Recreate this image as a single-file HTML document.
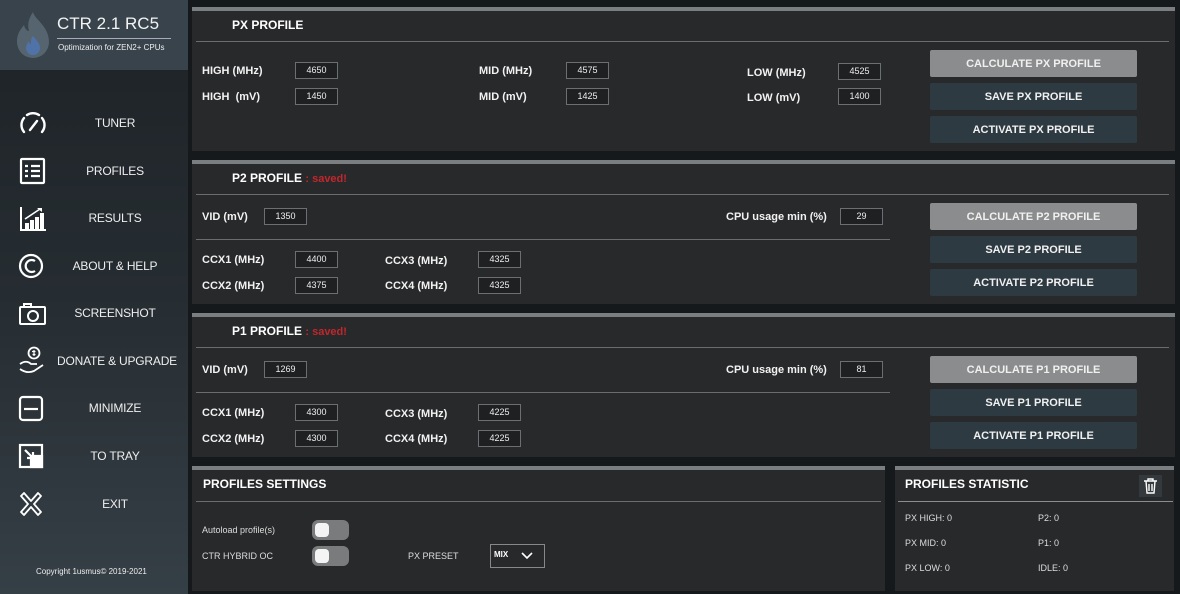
<!DOCTYPE html>
<html><head><meta charset="utf-8"><style>
*{margin:0;padding:0;box-sizing:border-box}
body{width:1180px;height:594px;background:#16191c;font-family:"Liberation Sans",sans-serif;color:#fff;position:relative;overflow:hidden}
.a{position:absolute}
.side{left:0;top:0;width:188px;height:594px;background:linear-gradient(180deg,#1d2226 0%,#262d32 50%,#353f46 100%)}
.hdr{left:0;top:0;width:188px;height:70px;background:#38434b}
.nav{position:absolute;left:40px;width:150px;text-align:center;font-size:12px;color:#eee;letter-spacing:-0.2px}
.ic{position:absolute;left:18px;width:30px;height:28px}
.pn{background:#28292b;border-top:4px solid #7b7e81}
.ttl{position:absolute;font-size:12px;font-weight:bold}
.ln{position:absolute;height:1px;background:#6a6d70}
.lb{position:absolute;font-size:11px;font-weight:bold;color:#f2f2f2}
.in{position:absolute;width:43px;height:17px;border:1px solid #6c6f72;background:#1f2022;font-size:9px;text-align:center;line-height:15px;color:#eee}
.bt{position:absolute;left:930px;width:207px;height:27px;border-radius:2px;background:#2e3a42;font-size:11px;font-weight:bold;text-align:center;line-height:28px;color:#f0f0f0}
.bt.c{background:#8b8c8d}
.red{color:#c0272d}
.sm{position:absolute;font-size:9px;color:#ddd}
.tg{position:absolute;width:37px;height:20px;border-radius:6px;background:#7a7b7c}
.tg::after{content:"";position:absolute;left:3px;top:3px;width:14px;height:14px;border-radius:4px;background:#f4f4f4}
</style></head><body>
<div class="a side"></div>
<div class="a hdr"></div>
<svg class="a" style="left:14px;top:10px" width="38" height="48" viewBox="0 0 38 48"><path d="M19 2c2 8 16 14 16 30a16 16 0 0 1-32 0c0-9 4-13 7-17 1 4 3 6 5 6-2-7 0-13 4-19z" fill="#56646f"/><path d="M19 26c3 4 7 7 7 12a7 7 0 0 1-14 0c0-3 2-5 3-7 0 2 1 3 2 3 0-3 0-6 2-8z" fill="#4f73a8"/></svg>
<div class="a" style="left:57px;top:14px;font-size:17px;color:#f3f3f3">CTR 2.1 RC5</div>
<div class="a" style="left:57px;top:38px;width:114px;height:1px;background:#aab"></div>
<div class="a" style="left:58px;top:43px;font-size:8px;color:#eee">Optimization for ZEN2+ CPUs</div>

<svg class="ic" style="top:110px" viewBox="0 0 30 28" fill="none" stroke="#fff" stroke-width="2.4" stroke-linecap="round"><path d="M6 22a11 11 0 0 1 0-14M24 22a11 11 0 0 0 0-14M9 5a11 11 0 0 1 12 0M12 20l7-9"/></svg>
<div class="nav" style="top:116px">TUNER</div>
<svg class="ic" style="top:157px" viewBox="0 0 30 28" fill="none" stroke="#fff" stroke-width="2.2"><rect x="3" y="2" width="23" height="24" rx="1"/><path d="M7 9h3M13 9h9M7 14h3M13 14h9M7 19h3M13 19h9"/></svg>
<div class="nav" style="top:164px">PROFILES</div>
<svg class="ic" style="top:205px" viewBox="0 0 30 28" fill="#fff"><path d="M2 2v24h26v-2H4V2z"/><rect x="7" y="18" width="4" height="6"/><rect x="12" y="15" width="4" height="9"/><rect x="17" y="12" width="4" height="12"/><rect x="22" y="8" width="4" height="16"/><path d="M7 14l15-10" stroke="#fff" stroke-width="1.6"/><path d="M19 3h5v4z"/></svg>
<div class="nav" style="top:211px">RESULTS</div>
<svg class="ic" style="top:252px" viewBox="0 0 30 28" fill="none" stroke="#fff" stroke-width="2.2"><circle cx="13" cy="14" r="11"/><path d="M17 9a6 6 0 1 0 0 10"/></svg>
<div class="nav" style="top:259px">ABOUT &amp; HELP</div>
<svg class="ic" style="top:300px" viewBox="0 0 30 28" fill="none" stroke="#fff" stroke-width="2"><rect x="2" y="7" width="25" height="17" rx="1"/><path d="M6 7V4h7v3"/><circle cx="15" cy="16" r="5"/></svg>
<div class="nav" style="top:306px">SCREENSHOT</div>
<svg class="ic" style="top:346px" viewBox="0 0 30 28" fill="none" stroke="#fff" stroke-width="1.8"><circle cx="16" cy="7" r="5.5"/><path d="M16 4v6M14 5.5h3.5M14.5 8.5h3" stroke-width="1.2"/><path d="M2 18c4-3 8-3 11 0h6M2 23c4 3 9 4 14 2l9-6"/></svg>
<div class="nav" style="top:354px;left:42px">DONATE &amp; UPGRADE</div>
<svg class="ic" style="top:395px" viewBox="0 0 30 28" fill="none" stroke="#fff" stroke-width="2.2"><rect x="2" y="2" width="22" height="23" rx="3"/><path d="M6 14h14"/></svg>
<div class="nav" style="top:401px">MINIMIZE</div>
<svg class="ic" style="top:443px" viewBox="0 0 30 28" fill="none" stroke="#fff" stroke-width="2.2"><rect x="2" y="2" width="22" height="22"/><path d="M7 7l8 8M9 15h6V9" /><rect x="13" y="13" width="11" height="11" fill="#fff"/></svg>
<div class="nav" style="top:449px">TO TRAY</div>
<svg class="ic" style="top:490px" viewBox="0 0 30 28" fill="none" stroke="#fff" stroke-width="1.8" stroke-linejoin="round"><path d="M3 6l3-3 7 8 7-8 3 3-7 8 7 8-3 3-7-8-7 8-3-3 7-8z"/></svg>
<div class="nav" style="top:497px">EXIT</div>
<div class="a" style="left:36px;top:567px;font-size:8px;color:#eee">Copyright 1usmus© 2019-2021</div>

<!-- PX -->
<div class="a pn" style="left:192px;top:7px;width:983px;height:144px"></div>
<div class="ttl" style="left:232px;top:18px">PX PROFILE</div>
<div class="ln" style="left:196px;top:41px;width:973px"></div>
<div class="lb" style="left:202px;top:65px">HIGH (MHz)</div><div class="in" style="left:295px;top:62px">4650</div>
<div class="lb" style="left:202px;top:91px">HIGH &nbsp;(mV)</div><div class="in" style="left:295px;top:88px">1450</div>
<div class="lb" style="left:479px;top:65px">MID (MHz)</div><div class="in" style="left:566px;top:62px">4575</div>
<div class="lb" style="left:479px;top:91px">MID (mV)</div><div class="in" style="left:566px;top:88px">1425</div>
<div class="lb" style="left:747px;top:67px">LOW (MHz)</div><div class="in" style="left:838px;top:63px">4525</div>
<div class="lb" style="left:747px;top:92px">LOW (mV)</div><div class="in" style="left:838px;top:88px">1400</div>
<div class="bt c" style="top:50px">CALCULATE PX PROFILE</div>
<div class="bt" style="top:83px">SAVE PX PROFILE</div>
<div class="bt" style="top:116px">ACTIVATE PX PROFILE</div>

<!-- P2 -->
<div class="a pn" style="left:192px;top:160px;width:983px;height:144px"></div>
<div class="ttl" style="left:232px;top:171px">P2 PROFILE <span class="red" style="font-size:11px">: saved!</span></div>
<div class="ln" style="left:196px;top:194px;width:973px"></div>
<div class="lb" style="left:202px;top:211px">VID (mV)</div><div class="in" style="left:264px;top:208px">1350</div>
<div class="lb" style="left:726px;top:211px">CPU usage min (%)</div><div class="in" style="left:840px;top:208px">29</div>
<div class="ln" style="left:196px;top:239px;width:694px"></div>
<div class="lb" style="left:202px;top:254px">CCX1 (MHz)</div><div class="in" style="left:295px;top:251px">4400</div>
<div class="lb" style="left:202px;top:280px">CCX2 (MHz)</div><div class="in" style="left:295px;top:277px">4375</div>
<div class="lb" style="left:385px;top:255px">CCX3 (MHz)</div><div class="in" style="left:478px;top:251px">4325</div>
<div class="lb" style="left:385px;top:280px">CCX4 (MHz)</div><div class="in" style="left:478px;top:277px">4325</div>
<div class="bt c" style="top:203px">CALCULATE P2 PROFILE</div>
<div class="bt" style="top:236px">SAVE P2 PROFILE</div>
<div class="bt" style="top:269px">ACTIVATE P2 PROFILE</div>

<!-- P1 -->
<div class="a pn" style="left:192px;top:313px;width:983px;height:144px"></div>
<div class="ttl" style="left:232px;top:324px">P1 PROFILE <span class="red" style="font-size:11px">: saved!</span></div>
<div class="ln" style="left:196px;top:347px;width:973px"></div>
<div class="lb" style="left:202px;top:364px">VID (mV)</div><div class="in" style="left:264px;top:361px">1269</div>
<div class="lb" style="left:726px;top:364px">CPU usage min (%)</div><div class="in" style="left:840px;top:361px">81</div>
<div class="ln" style="left:196px;top:392px;width:694px"></div>
<div class="lb" style="left:202px;top:407px">CCX1 (MHz)</div><div class="in" style="left:295px;top:404px">4300</div>
<div class="lb" style="left:202px;top:433px">CCX2 (MHz)</div><div class="in" style="left:295px;top:430px">4300</div>
<div class="lb" style="left:385px;top:408px">CCX3 (MHz)</div><div class="in" style="left:478px;top:404px">4225</div>
<div class="lb" style="left:385px;top:433px">CCX4 (MHz)</div><div class="in" style="left:478px;top:430px">4225</div>
<div class="bt c" style="top:356px">CALCULATE P1 PROFILE</div>
<div class="bt" style="top:389px">SAVE P1 PROFILE</div>
<div class="bt" style="top:422px">ACTIVATE P1 PROFILE</div>

<!-- settings -->
<div class="a pn" style="left:192px;top:466px;width:693px;height:125px"></div>
<div class="ttl" style="left:203px;top:477px">PROFILES SETTINGS</div>
<div class="ln" style="left:196px;top:501px;width:685px"></div>
<div class="sm" style="left:202px;top:525px">Autoload profile(s)</div>
<div class="tg" style="left:312px;top:520px"></div>
<div class="sm" style="left:202px;top:551px">CTR HYBRID OC</div>
<div class="tg" style="left:312px;top:546px"></div>
<div class="sm" style="left:408px;top:551px">PX PRESET</div>
<div class="a" style="left:490px;top:544px;width:55px;height:24px;border:1px solid #888"></div>
<div class="a" style="left:494px;top:550px;font-size:8px;font-weight:bold">MIX</div>
<svg class="a" style="left:520px;top:551px" width="14" height="10"><path d="M2 2l5 5 5-5" stroke="#fff" stroke-width="1.6" fill="none"/></svg>

<!-- stats -->
<div class="a pn" style="left:895px;top:466px;width:279px;height:125px"></div>
<div class="ttl" style="left:905px;top:477px">PROFILES STATISTIC</div>
<div class="a" style="left:1139px;top:475px;width:23px;height:22px;background:#33393d"></div>
<svg class="a" style="left:1143px;top:478px" width="15" height="16" viewBox="0 0 15 16" fill="none" stroke="#fff" stroke-width="1.4"><path d="M1 3h13M5 3V1h5v2M3 3l1 12h7l1-12M6 6v7M9 6v7"/></svg>
<div class="ln" style="left:898px;top:501px;width:275px;background:#8a8d90"></div>
<div class="sm" style="left:905px;top:513px">PX HIGH: 0</div><div class="sm" style="left:1038px;top:513px">P2: 0</div>
<div class="sm" style="left:905px;top:538px">PX MID: 0</div><div class="sm" style="left:1038px;top:538px">P1: 0</div>
<div class="sm" style="left:905px;top:563px">PX LOW: 0</div><div class="sm" style="left:1038px;top:563px">IDLE: 0</div>
</body></html>
